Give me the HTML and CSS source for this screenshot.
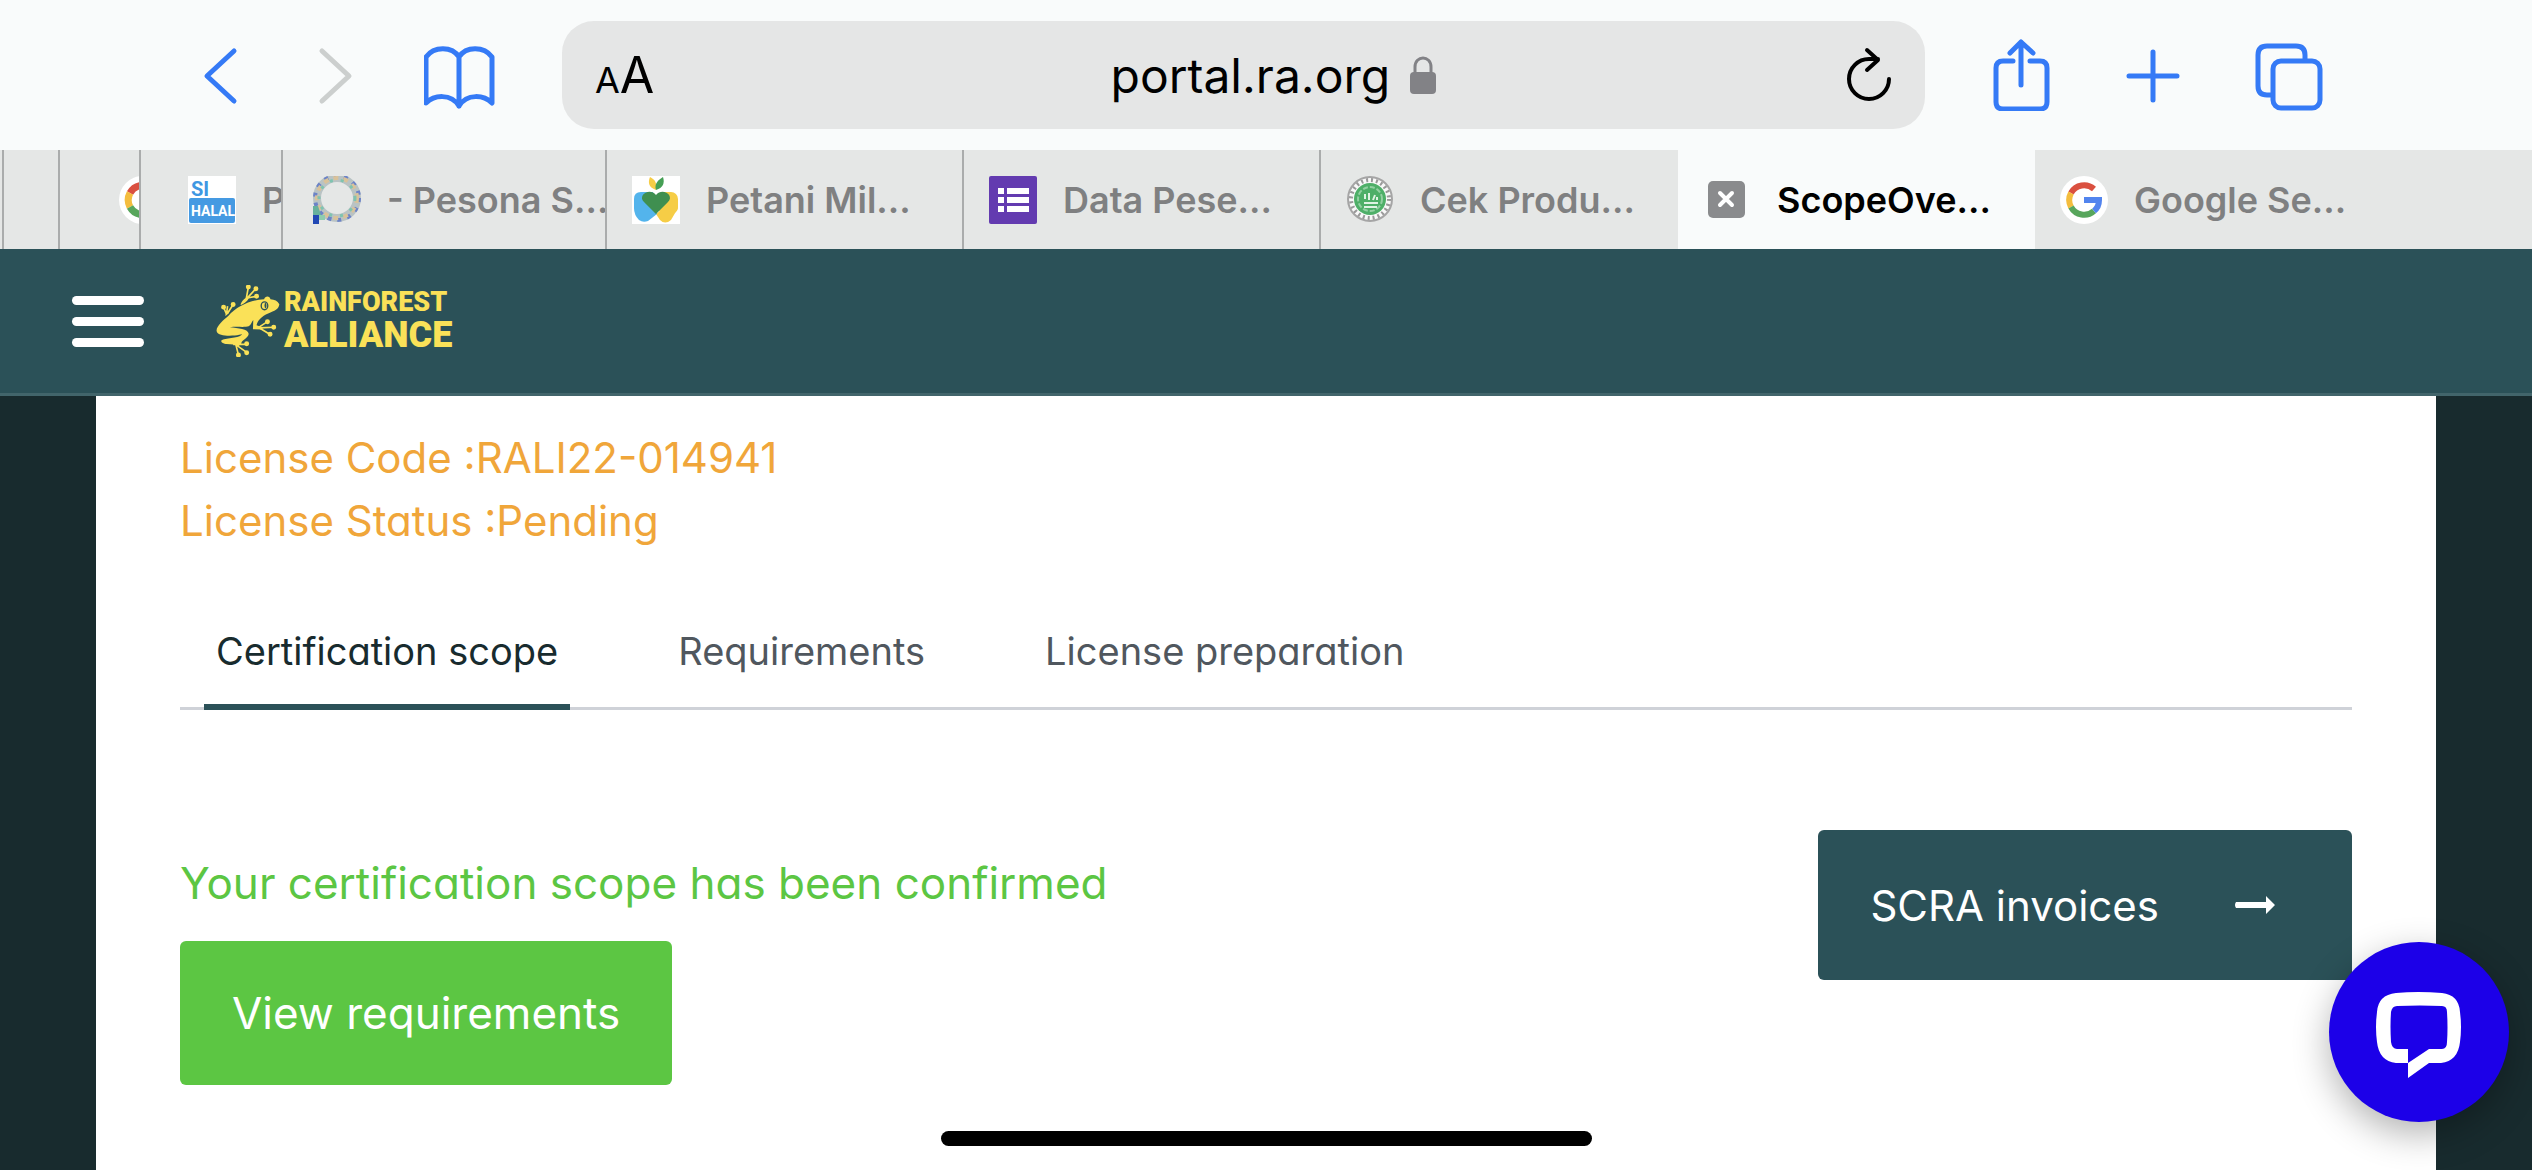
FILE: index.html
```html
<!DOCTYPE html>
<html lang="en">
<head>
    <meta charset="UTF-8">
    <meta name="viewport" content="width=device-width, initial-scale=1.0">
    <title>ScopeOverview</title>
    <link rel="stylesheet" href="styles.css">
</head>
<body>
    <!-- Browser toolbar -->
    <div class="toolbar">
        <button class="tool" aria-label="Back">
            <svg viewBox="0 0 72 72"><path d="M50 12 23 37l27 25"/></svg>
        </button>
        <button class="tool disabled" aria-label="Forward" disabled>
            <svg viewBox="0 0 72 72"><path d="M18 12l27 25-27 25"/></svg>
        </button>
        <button class="tool" aria-label="Bookmarks">
            <svg viewBox="0 0 72 72"><path d="M35 67V18C28 7 10 7 2 18v46c8-8 25-10 33 3 8-13 25-11 33-3V18C60 7 42 7 35 18"/></svg>
        </button>
        <div class="address">
            <button class="text-size" aria-label="Text size"><span class="small-a">A</span>A</button>
            <div class="url">
                <input type="text" value="portal.ra.org" aria-label="Address">
                <svg class="lock" viewBox="0 0 26 38"><rect y="16" width="26" height="22" rx="4"/><path d="M5 17v-6c0-12 16-12 16 0v6"/></svg>
            </div>
            <button class="reload" aria-label="Reload">
                <svg viewBox="0 0 46 56"><path d="M43 32a20 20 0 1 1-20-20h9M21 3l11 10-11 10"/></svg>
            </button>
        </div>
        <button class="tool" aria-label="Share">
            <svg viewBox="0 0 72 72"><path d="M26 22H16q-7 0-7 7v34q0 7 7 7h37q7 0 7-7V29q0-7-7-7H43M34 46V3M23 14 34 3l12 11"/></svg>
        </button>
        <button class="tool" aria-label="New tab">
            <svg viewBox="0 0 72 72"><path d="M34 13v48M10 37h48"/></svg>
        </button>
        <button class="tool" aria-label="Show tabs">
            <svg viewBox="0 0 72 72"><path d="M20 56h-4q-9 0-9-9V16q0-9 9-9h29q9 0 9 9v5"/><rect x="22" y="22" width="47" height="47" rx="8"/></svg>
        </button>
    </div>

    <div class="browser-tabs">
        <button class="tab stack-1" aria-label="Tab"></button>
        <button class="tab stack-2" aria-label="Tab"></button>
        <button class="tab stack-3" aria-label="Google">
            <svg class="favicon" viewBox="0 0 48 48">
                <circle cx="24" cy="24" r="24" fill="#fff"/>
                <g fill="none" stroke-width="7">
                    <path d="M35 14A15 15 0 0 0 11 17" stroke="#da5040"/>
                    <path d="M11 17a15 15 0 0 0 0 14" stroke="#f4bd3e"/>
                    <path d="M11 31a15 15 0 0 0 23 4" stroke="#58a65c"/>
                </g>
            </svg>
        </button>
        <button class="tab stack-4">
            <svg class="favicon" viewBox="0 0 48 48">
                <rect width="48" height="48" fill="#fff"/>
                <rect x="1" y="22" width="46" height="25" rx="2" fill="#459ae2"/>
                <text class="halal-top" x="3" y="20">SI</text>
                <text class="halal-bottom" x="3" y="40">HALAL</text>
            </svg>
            <span>P</span>
        </button>
        <button class="tab stack-5">
            <svg class="favicon" viewBox="0 0 48 48">
                <circle cx="24" cy="22" r="20" fill="none" stroke="#b9c3c4" stroke-width="8"/>
                <circle cx="24" cy="22" r="22" fill="none" stroke="#6b83c8" stroke-width="4" stroke-dasharray="4 6"/>
                <circle cx="24" cy="22" r="20" fill="none" stroke="#d9c29a" stroke-width="4" stroke-dasharray="5 5"/>
                <circle cx="24" cy="22" r="18" fill="none" stroke="#7fc4b0" stroke-width="3" stroke-dasharray="3 8"/>
                <path d="M0 30h5l3 9H0z" fill="#67b19c"/>
                <path d="M0 39h6v9H0z" fill="#2148b4"/>
                <path d="M6 39h6v5H6z" fill="#8fccae"/>
            </svg>
            <span>- Pesona S...</span>
        </button>
        <button class="tab">
            <svg class="favicon" viewBox="0 0 48 48">
                <rect width="48" height="48" fill="#fff"/>
                <rect x="26" y="16" width="20" height="22" rx="7" fill="#f6cd46"/>
                <path d="M24 38l18-14 4 8-7 12q-6 5-11 0z" fill="#f6cd46"/>
                <path d="M9 16h12l4 22-9 7q-5 2-9-1-5-5-5-12v-9q0-7 7-7z" fill="#53b4ec"/>
                <path d="M24 38 12 26c-7-7 6-15 12-7 6-8 19 0 12 7z" fill="#3f8f50"/>
                <path d="M24 14c-8-3-8-8-6-13 6 3 7 7 6 13z" fill="#f6cd46"/>
                <path d="M24 14c-2-6 2-10 7-13 2 6 0 11-7 13z" fill="#459f55"/>
            </svg>
            <span>Petani Mil...</span>
        </button>
        <button class="tab">
            <svg class="favicon" viewBox="0 0 48 48">
                <rect width="48" height="48" rx="2" fill="#633bb0"/>
                <path d="M9 12h6v6H9zm9 0h22v6H18zM9 21h6v6H9zm9 0h22v6H18zM9 30h6v6H9zm9 0h22v6H18z" fill="#fff"/>
            </svg>
            <span>Data Pese...</span>
        </button>
        <button class="tab">
            <svg class="favicon" viewBox="0 0 48 48">
                <circle cx="24" cy="23" r="22" fill="#f8f8f8" stroke="#a5a5a5" stroke-width="2"/>
                <circle cx="24" cy="23" r="19" fill="none" stroke="#999" stroke-width="4" stroke-dasharray="2 3"/>
                <circle cx="24" cy="23" r="16" fill="#4eaf68"/>
                <circle cx="24" cy="23" r="12" fill="none" stroke="#93d0a2" stroke-width="2" stroke-dasharray="5 2"/>
                <path d="M18 27h14M19 23v-5m4 6v-7m4 7 2-5m2 5v-3M18 31h13" stroke="#dff2e3" stroke-width="2" fill="none"/>
            </svg>
            <span>Cek Produ...</span>
        </button>
        <button class="tab active">
            <svg class="favicon" viewBox="0 0 48 48">
                <rect x="5" y="5" width="37" height="37" rx="5" fill="#8a8b8d"/>
                <path d="M17 17l12 12M29 17 17 29" stroke="#fff" stroke-width="4" stroke-linecap="round"/>
            </svg>
            <span>ScopeOve...</span>
        </button>
        <button class="tab last">
            <svg class="favicon" viewBox="0 0 48 48">
                <circle cx="24" cy="24" r="24" fill="#fff"/>
                <g fill="none" stroke-width="6">
                    <path d="M34 13A15 15 0 0 0 11 17" stroke="#da5040"/>
                    <path d="M11 17a15 15 0 0 0 0 14" stroke="#f4bd3e"/>
                    <path d="M11 31a15 15 0 0 0 23 4" stroke="#58a65c"/>
                    <path d="M24 24h15q0 7-5 11" stroke="#5284ee"/>
                </g>
            </svg>
            <span>Google Se...</span>
        </button>
    </div>

    <header class="header">
        <button class="menu" aria-label="Menu"><i></i><i></i><i></i></button>
        <a class="logo" href="#">
            <svg class="frog" viewBox="528 104 194 218">
                <path d="M720 162c-6-10-14-14-27-15-2-12-17-10-19 0-43 3-82 21-109 51-13 11-38 32-35 46 3 15 35 14 55 13 14-1 27-7 19-1-9 8-50 10-59 15-5 6 7 12 15 12 15 0 26 2 35 7l10-9c-2-8 23-17 22-29-1-15-33-17-57-20 20-3 46 1 57-3 8-4 9-14 14-19l-1 28 27 1 3-6-19-7c2-14 16-28 35-36 20-9 32-12 34-28z"/>
                <path d="M602 164q4-13 18-22l8-1q0 9-22 23zM556 197l3-11 10-3q0 7-11 14z"/>
                <g class="toes">
                    <path d="M620 144l6-34M624 142l25-27M618 144l33-6M560 192l-9-20M560 192l3-24M562 191l18-28M655 234l29-19M660 234l43-2M660 234l32 20M580 284l40 0M590 286l31 22M588 284l8 32"/>
                    <circle cx="626" cy="110" r="5"/><circle cx="649" cy="115" r="5"/><circle cx="651" cy="138" r="5"/>
                    <circle cx="551" cy="171" r="5"/><circle cx="580" cy="163" r="5"/>
                    <circle cx="684" cy="215" r="5"/><circle cx="703" cy="232" r="5"/><circle cx="692" cy="253" r="5"/>
                    <circle cx="621" cy="282" r="5"/><circle cx="621" cy="309" r="5"/><circle cx="596" cy="316" r="5"/>
                </g>
                <ellipse class="eye" cx="675" cy="167" rx="10" ry="12"/>
                <ellipse class="pupil" cx="678" cy="166" rx="3" ry="8"/>
            </svg>
            <span class="logo-text">
                <span class="logo-top">RAINFOREST</span>
                <span class="logo-bottom">ALLIANCE</span>
            </span>
        </a>
    </header>

    <main class="content">
        <div class="license">
            <p>License Code :RALI22-014941</p>
            <p>License Status :Pending</p>
        </div>

        <nav class="scope-tabs">
            <a class="current" href="#scope">Certification scope</a>
            <a href="#requirements">Requirements</a>
            <a href="#license">License preparation</a>
        </nav>

        <div class="scope" id="scope">
            <div class="confirmation">
                <p>Your certification scope has been confirmed</p>
                <button class="btn green">View requirements</button>
            </div>
            <button class="btn invoices">
                SCRA invoices
                <svg viewBox="0 0 42 20"><path d="M2 7h30V1l9 9-9 9v-6H2q-2-3 0-6z" fill="currentColor"/></svg>
            </button>
        </div>
    </main>

    <button class="chat" aria-label="Open chat">
        <svg viewBox="0 0 86 86">
            <path fill-rule="evenodd" d="M20 1q22-2 46 0 17 2 18 19 2 15 0 30-2 19-19 21H53L32 86V71H20Q3 69 1 50q-2-15 0-30Q2 3 20 1zm1 13q-5 0-6 6-1 14 0 30 1 7 6 7h11v14l21-14h13q5 0 5-7 1-14 0-30 0-6-5-6-22-1-45 0z"/>
        </svg>
    </button>
    <div class="home-indicator"></div>
</body>
</html>
```
FILE: styles.css
```css
* {
    box-sizing: border-box;
}

body {
    margin: 0;
    height: 100vh;
    overflow: hidden;
    display: flex;
    flex-direction: column;
    font-family: Inter, sans-serif;
    background-color: #182b2e;
}

button {
    font-family: inherit;
    border: none;
    padding: 0;
    background: none;
    cursor: pointer;
}

p {
    margin: 0;
}

/* browser toolbar */
.toolbar {
    display: flex;
    align-items: center;
    gap: 48px;
    padding: 21px 209px 21px 184px;
    background-color: #f9fbfb;
}

.tool {
    flex: none;
    width: 72px;
    height: 76px;
}

.tool svg {
    display: block;
    width: 72px;
    fill: none;
    stroke: #357af6;
    stroke-width: 5;
    stroke-linecap: round;
    stroke-linejoin: round;
}

.tool.disabled svg {
    stroke: #cccfce;
}

.toolbar .address + .tool ~ .tool {
    margin-left: 12px;
}

.address {
    flex: 1;
    display: flex;
    align-items: center;
    justify-content: space-between;
    height: 108px;
    margin: 0 14px 0 18px;
    padding: 0 33px;
    border-radius: 32px;
    background-color: #e5e6e6;
}

.text-size {
    font-size: 50px;
    color: #000;
}

.small-a {
    font-size: 36px;
}

.url {
    display: flex;
    align-items: center;
    gap: 20px;
}

.url input {
    width: 326px;
    padding: 0;
    border: none;
    background: none;
    font-family: inherit;
    font-size: 48px;
    text-align: right;
    color: #000;
}

.lock {
    width: 26px;
    fill: #828286;
}

.lock path {
    fill: none;
    stroke: #828286;
    stroke-width: 3;
}

.reload svg {
    display: block;
    width: 46px;
    fill: none;
    stroke: #000;
    stroke-width: 4;
    stroke-linecap: round;
    stroke-linejoin: round;
}

/* browser tabs */
.browser-tabs {
    display: flex;
    height: 99px;
    background-color: #e5e7e6;
}

.tab {
    flex: none;
    display: flex;
    align-items: center;
    gap: 26px;
    width: 14.1%;
    padding-left: 25px;
    overflow: hidden;
    border-right: 2px solid #aaacac;
    font-size: 36px;
    font-weight: 600;
    white-space: nowrap;
    color: #7f8081;
}

.favicon {
    flex: none;
    width: 48px;
    height: 48px;
}

.stack-1 {
    width: 4px;
    padding-left: 0;
}

.stack-2 {
    width: 56px;
}

.stack-3 {
    width: 81px;
    padding-left: 59px;
}

.stack-4 {
    width: 142px;
    padding-left: 47px;
}

.stack-5 {
    width: 324px;
    padding-left: 30px;
}

.tab.active {
    border: none;
    background-color: #f9fbfb;
    color: #000;
}

.tab.last {
    flex: 1;
    border: none;
}

.tab:has(+ .active) {
    border: none;
}

.halal-top,
.halal-bottom {
    font-family: Roboto, sans-serif;
    font-weight: 700;
    font-size: 20px;
    fill: #3f97e2;
}

.halal-bottom {
    font-size: 14px;
    fill: #fff;
}

/* portal header */
.header {
    display: flex;
    align-items: center;
    gap: 72px;
    height: 147px;
    padding: 0 72px;
    background-color: #2b5158;
    border-bottom: 3px solid #42656b;
}

.menu {
    display: flex;
    flex-direction: column;
    gap: 12px;
    width: 72px;
}

.menu i {
    height: 9px;
    border-radius: 5px;
    background-color: #fff;
}

.logo {
    display: flex;
    align-items: center;
    gap: 4px;
    text-decoration: none;
    color: #fae158;
}

.frog {
    width: 64px;
    height: 72px;
    fill: #fae158;
}

.toes {
    stroke: #fae158;
    stroke-width: 5;
}

.toes path {
    fill: none;
}

.eye {
    fill: #fae158;
    stroke: #2b5158;
    stroke-width: 4;
}

.pupil {
    fill: #2b5158;
}

.logo-text {
    display: flex;
    flex-direction: column;
    font-family: Roboto, sans-serif;
    font-weight: 900;
}

.logo-top {
    font-size: 27px;
    line-height: 28px;
}

.logo-bottom {
    font-size: 36px;
    line-height: 38px;
}

/* page content */
.content {
    flex: 1;
    margin: 0 96px;
    padding: 30px 84px 0;
    background-color: #fff;
    font-size: 42px;
    line-height: 63px;
    font-feature-settings: "cv11";
}

.license {
    color: #f0a63a;
}

.scope-tabs {
    display: flex;
    gap: 96px;
    margin-top: 72px;
    padding: 0 24px;
    border-bottom: 3px solid #cfd2d8;
    font-size: 38px;
    line-height: 54px;
}

.scope-tabs a {
    padding: 0 12px 26px;
    margin-bottom: -3px;
    border-bottom: 6px solid transparent;
    text-decoration: none;
    color: #50575e;
}

.scope-tabs .current {
    border-color: #2b5158;
    color: #182b2e;
}

.scope {
    display: flex;
    justify-content: space-between;
    align-items: flex-start;
    margin-top: 120px;
}

.confirmation {
    padding-top: 22px;
    font-size: 44px;
    color: #5cc643;
}

.btn {
    display: flex;
    align-items: center;
    height: 144px;
    padding: 0 52px;
    border-radius: 6px;
    font-size: 42px;
    font-feature-settings: inherit;
    color: #fff;
}

.green {
    margin-top: 26px;
    font-size: 44px;
    background-color: #5cc643;
}

.invoices {
    gap: 75px;
    height: 150px;
    padding-right: 76px;
    background-color: #2b5158;
}

.invoices svg {
    width: 42px;
}

/* floating parts */
.chat {
    position: fixed;
    right: 23px;
    bottom: 48px;
    display: flex;
    align-items: center;
    justify-content: center;
    width: 180px;
    height: 180px;
    padding-top: 6px;
    border-radius: 50%;
    background-color: #1c00e8;
    box-shadow: 0 12px 36px rgba(0, 0, 0, 0.3);
}

.chat svg {
    width: 86px;
    fill: #fff;
}

.home-indicator {
    position: fixed;
    left: 50%;
    bottom: 24px;
    width: 651px;
    height: 15px;
    margin-left: -325px;
    border-radius: 8px;
    background-color: #000;
}
```
